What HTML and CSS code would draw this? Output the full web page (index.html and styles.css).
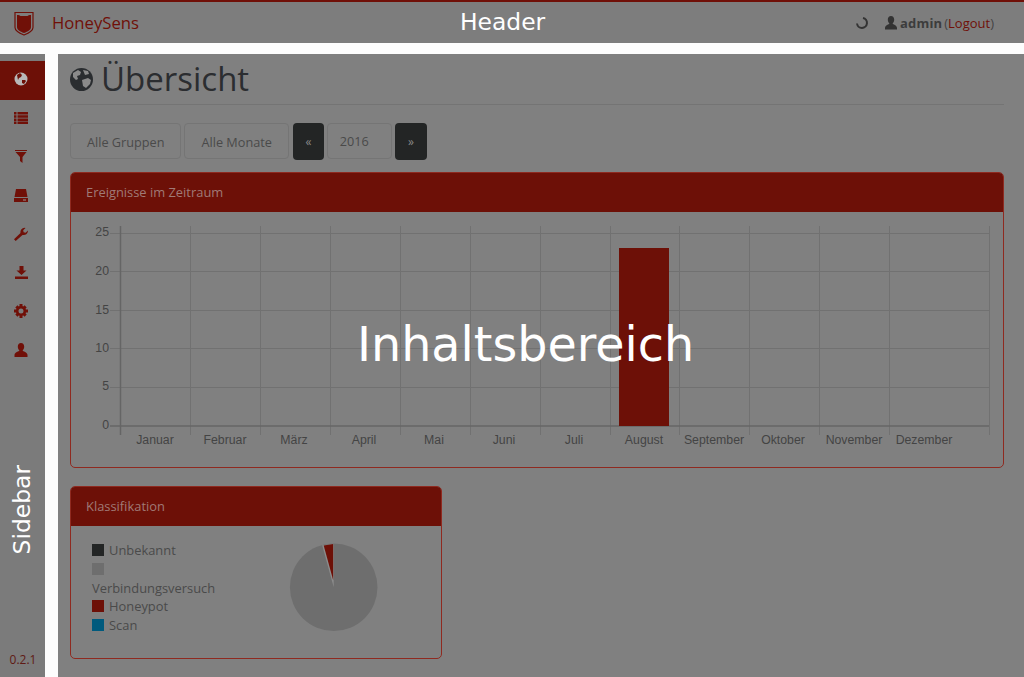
FILE: index.html
```html
<!DOCTYPE html>
<html lang="de">
<head>
    <meta charset="UTF-8">
    <title>HoneySens</title>
    <link rel="stylesheet" href="styles.css">
</head>
<body>
    <header class="topbar">
        <svg class="brand-icon" width="20" height="25" viewBox="0 0 20 25">
            <path d="M1 1.500h18v15c0 3.500-4 5.500-9 7.500-5-2-9-4-9-7.500z" fill="none" stroke="#701008" stroke-width="1.200"/>
            <path d="M3 4c2 0 3 .5 3.500 1h7c.5-.5 1.500-1 3.500-1v12c0 2.800-3 4.500-7 6-4-1.500-7-3.200-7-6z" fill="#701008"/>
        </svg>
        <span class="brand-name">HoneySens</span>
        <span class="topbar-label">Header</span>
        <div class="user-info">
            <svg class="spinner" width="14" height="14" viewBox="0 0 14 14">
                <path d="M8 2a5 5 0 1 1-6 5.500" fill="none" stroke="#333" stroke-width="2"/>
            </svg>
            <svg width="14" height="14" viewBox="0 0 14 14">
                <path d="M7 0c2 0 3.200 1.500 3.200 3.600 0 2-1 3.400-1.700 4 .3.800 4.500 1.600 4.500 4.400v1.500H1V12c0-2.800 4.200-3.600 4.500-4.400-.7-.6-1.700-2-1.700-4C3.800 1.500 5 0 7 0z" fill="#333"/>
            </svg>
            <span class="user-text"><b>admin</b> (<a href="#">Logout</a>)</span>
        </div>
    </header>

    <div class="layout">
        <aside class="sidebar">
            <nav class="side-nav">
                <a class="side-item active" href="#">
                    <svg width="14" height="14" viewBox="0 0 14 14"><circle cx="7" cy="7" r="6.500" fill="#b8b8b8"/><path d="M3 3l3-2 2 2-1 2-2 1-1 2zM8 8l3 0 1 1-2 3-2-1z" fill="#6d1007"/></svg>
                </a>
                <a class="side-item" href="#">
                    <svg width="14" height="12" viewBox="0 0 14 12"><path d="M0 0h2.500v2.500H0zM3.500 0H14v2.500H3.500zM0 3.200h2.500v2.500H0zM3.500 3.200H14v2.500H3.500zM0 6.400h2.500v2.500H0zM3.500 6.400H14v2.500H3.500zM0 9.500h2.500V12H0zM3.500 9.500H14V12H3.500z" fill="#701008"/></svg>
                </a>
                <a class="side-item" href="#">
                    <svg width="12" height="13" viewBox="0 0 12 13"><path d="M0 0h12v1H0zM.5 2h11L7.500 7v6l-2.500-2V7z" fill="#701008"/></svg>
                </a>
                <a class="side-item" href="#">
                    <svg width="14" height="13" viewBox="0 0 14 13"><path d="M2 0h10l1.500 8h-13zM0 9h14v4H0z" fill="#701008"/><path d="M9 10.500h3v1H9z" fill="#999"/></svg>
                </a>
                <a class="side-item" href="#">
                    <svg width="14" height="14" viewBox="0 0 14 14"><path d="M0 12.300l6.500-6.200c-.5-2.500 1-5 4-5.300l1 .2-2.300 2.200.4 2 2 .5L14 3.400c.2 3-2.700 5.300-5.500 4.500L1.700 14z" fill="#701008"/></svg>
                </a>
                <a class="side-item" href="#">
                    <svg width="13" height="13" viewBox="0 0 13 13"><path d="M4.500 0h4v4.500h3L6.500 9l-5-4.500h3zM0 10.500h13V13H0z" fill="#701008"/></svg>
                </a>
                <a class="side-item" href="#">
                    <svg width="14" height="14" viewBox="0 0 14 14"><circle cx="7" cy="7" r="3.800" fill="none" stroke="#701008" stroke-width="2.600"/><path d="M5.500 0h3v3h-3zM5.500 11h3v3h-3zM0 5.500h3v3H0zM11 5.500h3v3h-3zM1.300 3.400l2.100-2.100 2 2-2.100 2.100zM8.600 10.700l2.100-2.100 2 2-2.100 2.100zM1.300 10.600l2-2 2.100 2.100-2 2zM8.600 3.300l2-2 2.100 2.100-2 2z" fill="#701008"/></svg>
                </a>
                <a class="side-item" href="#">
                    <svg width="14" height="14" viewBox="0 0 14 14"><path d="M7 0c2 0 3.200 1.500 3.200 3.600 0 2-1 3.400-1.700 4 .3.800 5 1.600 5 4.400V14H.5v-2c0-2.800 4.700-3.600 5-4.400-.7-.6-1.700-2-1.700-4C3.800 1.500 5 0 7 0z" fill="#701008"/></svg>
                </a>
            </nav>
            <span class="sidebar-label">Sidebar</span>
            <span class="version">0.2.1</span>
        </aside>

        <main class="content">
            <h1 class="page-title">
                <svg class="title-icon" width="23" height="23" viewBox="0 0 23 23">
                    <circle cx="11.500" cy="11.500" r="11.500" fill="#2a2d30"/>
                    <path d="M3 5l5-3 3 2-1 3-3 1 1 3-2 1-3-3zM13 2l5 1 1 3-4 1zM12 12l6-2 3 2-1 4-4 4-3-2z" fill="#8a8a8a"/>
                </svg>
                Übersicht
            </h1>

            <div class="filters">
                <button class="btn">Alle Gruppen</button>
                <button class="btn">Alle Monate</button>
                <button class="btn-dark btn-prev">«</button>
                <span class="year">2016</span>
                <button class="btn-dark">»</button>
            </div>

            <section class="panel">
                <div class="panel-head">Ereignisse im Zeitraum</div>
                <svg class="chart" width="932" height="255" viewBox="71 212 932 255">
                    <g stroke="#717171" stroke-width="1">
                        <path d="M110 233.500H989M110 271.500H989M110 310.500H989M110 348.500H989M110 387.500H989"/>
                        <path d="M190.500 226V435M260.500 226V435M330.500 226V435M400.500 226V435M470.500 226V435M540.500 226V435M610.500 226V435M679.500 226V435M749.500 226V435M819.500 226V435M889.500 226V435M989.500 226V435"/>
                    </g>
                    <path d="M110 426H989M120.500 226V435" stroke="#656565" stroke-width="1.500"/>
                    <rect x="619" y="248" width="50" height="178" fill="#6d1007"/>
                    <g class="tick-y" text-anchor="end">
                        <text x="109" y="236">25</text>
                        <text x="109" y="275">20</text>
                        <text x="109" y="314">15</text>
                        <text x="109" y="352">10</text>
                        <text x="109" y="390">5</text>
                        <text x="109" y="429">0</text>
                    </g>
                    <g class="tick-x" text-anchor="middle">
                        <text x="155" y="444">Januar</text>
                        <text x="225" y="444">Februar</text>
                        <text x="294" y="444">März</text>
                        <text x="364" y="444">April</text>
                        <text x="434" y="444">Mai</text>
                        <text x="504" y="444">Juni</text>
                        <text x="574" y="444">Juli</text>
                        <text x="644" y="444">August</text>
                        <text x="714" y="444">September</text>
                        <text x="783" y="444">Oktober</text>
                        <text x="854" y="444">November</text>
                        <text x="924" y="444">Dezember</text>
                    </g>
                </svg>
                <span class="content-label">Inhaltsbereich</span>
            </section>

            <section class="panel panel-small">
                <div class="panel-head">Klassifikation</div>
                <div class="panel-body">
                    <ul class="legend">
                        <li><i class="swatch swatch-dark"></i>Unbekannt</li>
                        <li><i class="swatch swatch-gray"></i><br>Verbindungsversuch</li>
                        <li><i class="swatch swatch-red"></i>Honeypot</li>
                        <li><i class="swatch swatch-blue"></i>Scan</li>
                    </ul>
                    <svg class="pie" width="91" height="91" viewBox="0 0 91 91">
                        <circle cx="45.700" cy="45.300" r="43.800" fill="#6e6e6e"/>
                        <path d="M45.700 45.300L34.200 3.300 45.700 1.800z" fill="#8c8c8c"/>
                        <path d="M45.200 38.300L35.700 3.500 45.200 2.100z" fill="#6d1007"/>
                    </svg>
                </div>
            </section>
        </main>
    </div>
</body>
</html>
```

FILE: styles.css
```css
* {
    box-sizing: border-box;
}

html, body {
    height: 100%;
}

body {
    margin: 0;
    height: 677px;
    overflow: hidden;
    background-color: #fdfdfd;
    font-family: "Open Sans", sans-serif;
    font-size: 13px;
    color: #444;
    display: flex;
    flex-direction: column;
}

a {
    text-decoration: none;
}

.topbar {
    height: 43px;
    flex: none;
    display: flex;
    align-items: center;
    background-color: #7d7d7d;
    border-top: 2px solid #701008;
    padding: 0 30px 0 14px;
    position: relative;
}

.brand-icon {
    margin-top: 2px;
}

.brand-name {
    margin-left: 18px;
    font-size: 16.700px;
    color: #701008;
}

.topbar-label {
    position: absolute;
    left: 460px;
    top: 5px;
    font-family: "DejaVu Sans", sans-serif;
    font-size: 23.400px;
    line-height: 30px;
    color: #fff;
}

.user-info {
    margin-left: auto;
    display: flex;
    align-items: center;
    gap: 2px;
}

.spinner {
    margin-right: 13px;
}

.user-text {
    color: #444;
}

.user-text b {
    color: #3c3c3c;
    letter-spacing: 0.2px;
    margin-right: -1.500px;
}

.user-text a {
    color: #701008;
}

.layout {
    flex: 1;
    display: flex;
    margin-top: 11px;
    min-height: 0;
    gap: 13px;
}

.sidebar {
    width: 45px;
    flex: none;
    background-color: #7b7b7b;
    display: flex;
    flex-direction: column;
    position: relative;
}

.side-nav {
    margin-top: 7px;
    display: flex;
    flex-direction: column;
}

.side-item {
    height: 38.700px;
    padding: 0 3px 2px 0;
    display: flex;
    align-items: center;
    justify-content: center;
}

.side-item.active {
    background-color: #6d1007;
}

.sidebar-label {
    position: absolute;
    left: 7px;
    top: 411px;
    font-family: "DejaVu Sans", sans-serif;
    font-size: 23.400px;
    line-height: 30px;
    color: #fff;
    writing-mode: vertical-rl;
    transform: rotate(180deg);
}

.version {
    margin-top: auto;
    margin-bottom: 9px;
    padding-left: 1px;
    text-align: center;
    font-size: 12px;
    color: #5f1a14;
}

.content {
    flex: 1;
    background-color: #808080;
    padding: 0 20px 0 12px;
}

.page-title {
    margin: 0;
    height: 51px;
    display: flex;
    align-items: center;
    gap: 8px;
    font-size: 33px;
    font-weight: 400;
    line-height: 44px;
    color: #2b2d30;
    border-bottom: 1px solid #747474;
}

.title-icon {
    margin-top: 1px;
}

.filters {
    margin-top: 18px;
    display: flex;
    gap: 3px;
    align-items: flex-start;
}

.btn, .year {
    height: 36px;
    border: 1px solid #757575;
    border-radius: 4px;
    background-color: #808080;
    color: #4a4a4a;
    font-family: "Open Sans", sans-serif;
    font-size: 12.700px;
    padding: 2px 16px 0;
}

.year {
    width: 65px;
    padding: 0 0 0 12px;
    line-height: 34px;
}

.btn-dark {
    width: 32px;
    height: 37px;
    border: none;
    border-radius: 4px;
    background-color: #232525;
    color: #888;
    font-family: "Open Sans", sans-serif;
    font-size: 12px;
    padding: 0;
}

.btn-prev {
    margin-left: 1px;
    width: 31px;
}

.panel {
    margin-top: 12px;
    border: 1px solid #8f2a20;
    border-radius: 5px;
    position: relative;
    overflow: hidden;
}

.panel + .panel {
    margin-top: 18px;
}

.panel-small {
    width: 372px;
}

.panel-head {
    height: 39px;
    padding-left: 15px;
    background-color: #6d1007;
    color: #a07a76;
    font-size: 12.900px;
    line-height: 38px;
}

.chart {
    display: block;
    height: 255px;
}

.tick-y text, .tick-x text {
    font-family: "Liberation Sans", sans-serif;
    font-size: 12.300px;
    fill: #444;
}

.content-label {
    position: absolute;
    left: 286px;
    top: 139px;
    font-family: "DejaVu Sans", sans-serif;
    font-size: 47.600px;
    line-height: 66px;
    color: #fff;
}

.panel-body {
    height: 132px;
    padding: 15.400px 0 0 21px;
    display: flex;
    align-items: flex-start;
    position: relative;
}

.legend {
    list-style: none;
    margin: 0;
    padding: 0;
    font-size: 12.900px;
    line-height: 18.570px;
    color: #4a4a4a;
}

.swatch {
    display: inline-block;
    width: 12px;
    height: 12px;
    margin-right: 5px;
    vertical-align: -1px;
}

.swatch-dark {
    background-color: #232525;
}

.swatch-gray {
    background-color: #6e6e6e;
}

.swatch-red {
    background-color: #6d1007;
}

.swatch-blue {
    background-color: #005a7d;
}

.pie {
    position: absolute;
    left: 217px;
    top: 16px;
}
```
